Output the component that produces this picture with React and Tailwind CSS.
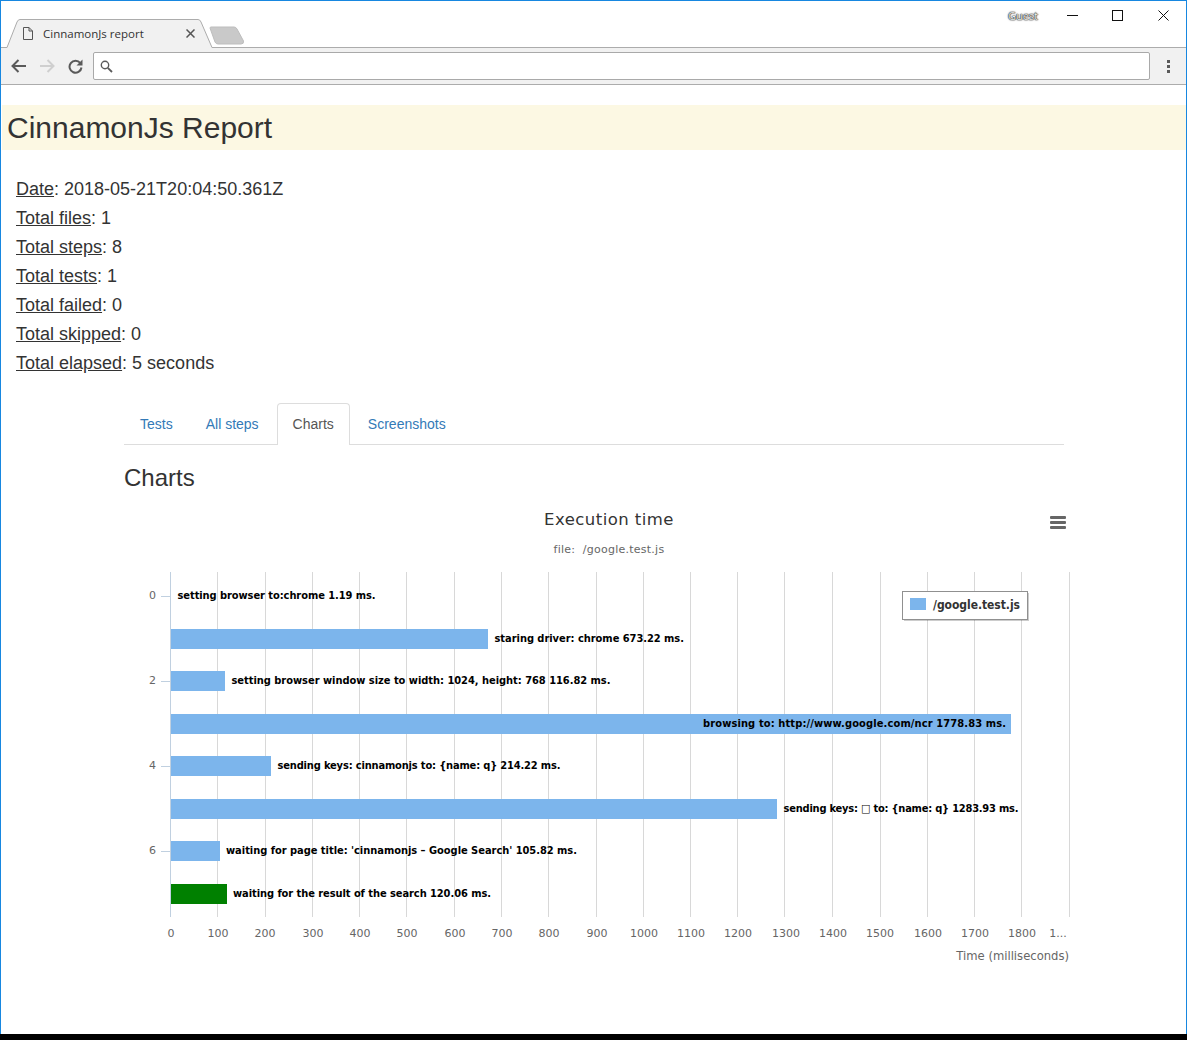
const FONT = { fontFamily: '"DejaVu Sans", Verdana, sans-serif' };
const COND = { fontFamily: '"DejaVu Sans Condensed", "DejaVu Sans", Verdana, sans-serif' };

const gridXs = [217, 265, 312, 359, 406, 454, 501, 548, 596, 643, 690, 737, 784, 832, 880, 927, 974, 1021, 1069];
const axisLabels = [
  [171, '0'], [218, '100'], [265, '200'], [313, '300'], [360, '400'], [407, '500'], [455, '600'], [502, '700'], [549, '800'], [597, '900'],
  [644, '1000'], [691, '1100'], [738, '1200'], [786, '1300'], [833, '1400'], [880, '1500'], [928, '1600'], [975, '1700'], [1022, '1800'], [1058, '1...'],
];
const bars = [
  { y: 587, end: 171, label: 'setting browser to:chrome 1.19 ms.', lx: 177.5, ly: 599, w: 198 },
  { y: 629, end: 488, label: 'staring driver: chrome 673.22 ms.', lx: 494.5, ly: 642, w: 189.5 },
  { y: 671, end: 225, label: 'setting browser window size to width: 1024, height: 768 116.82 ms.', lx: 231.5, ly: 684, w: 379 },
  { y: 714, end: 1011, label: 'browsing to: http://www.google.com/ncr 1778.83 ms.', lx: 703, ly: 727, w: 303 },
  { y: 756, end: 271, label: 'sending keys: cinnamonjs to: {name: q} 214.22 ms.', lx: 277.5, ly: 769, w: 283 },
  { y: 799, end: 777, label: 'sending keys: □ to: {name: q} 1283.93 ms.', lx: 783.5, ly: 812, w: 235 },
  { y: 841, end: 220, label: "waiting for page title: 'cinnamonjs – Google Search' 105.82 ms.", lx: 226, ly: 854, w: 351 },
  { y: 884, end: 227, label: 'waiting for the result of the search 120.06 ms.', lx: 233, ly: 897, w: 258, color: '#008000' },
];

function Chart() {
  return (
    <svg width="960" height="480" viewBox="120 500 960 480" className="block" style={FONT}>
      <text x="609" y="524.5" textAnchor="middle" fontSize="16.5" letterSpacing="0.45" fill="#333">Execution time</text>
      <text x="609" y="553" textAnchor="middle" fontSize="11" letterSpacing="0.25" fill="#666">{'file:\u00a0\u00a0/google.test.js'}</text>
      <g fill="#666">
        <rect x="1050" y="516" width="16" height="3" rx="1" />
        <rect x="1050" y="521" width="16" height="3" rx="1" />
        <rect x="1050" y="526" width="16" height="3" rx="1" />
      </g>
      {gridXs.map((x) => (
        <rect key={x} x={x} y="572" width="1" height="345" fill="#d8d8d8" />
      ))}
      <rect x="170" y="572" width="1" height="345" fill="#c0d0e0" />
      {[0, 2, 4, 6].map((n, i) => (
        <g key={n}>
          <rect x="161" y={596 + i * 85} width="9" height="1" fill="#c0d0e0" />
          <text x="156" y={599 + i * 85} textAnchor="end" fontSize="11" fill="#666">{n}</text>
        </g>
      ))}
      {bars.map((b) => (
        <g key={b.y}>
          {b.end > 171 && <rect x="171" y={b.y} width={b.end - 171} height="20" fill={b.color || '#7cb5ec'} />}
          <text
            x={b.lx}
            y={b.ly}
            textLength={b.w}
            lengthAdjust="spacing"
            fontSize="11"
            fontWeight="700"
            fill="#000"
            style={COND}
          >
            {b.label}
          </text>
        </g>
      ))}
      {axisLabels.map(([x, t]) => (
        <text key={t} x={x} y="937" textAnchor="middle" fontSize="11" fill="#666">{t}</text>
      ))}
      <text x="1069" y="960" textAnchor="end" fontSize="11.6" fill="#666">Time (milliseconds)</text>
      <rect x="904" y="593" width="125" height="28" fill="#000" opacity="0.2" />
      <rect x="902.5" y="591.5" width="125" height="28" fill="#fff" stroke="#909090" />
      <rect x="910" y="598" width="16" height="12" fill="#7cb5ec" />
      <text x="933" y="609" fontSize="12" fontWeight="700" fill="#333" textLength="87" style={COND}>/google.test.js</text>
    </svg>
  );
}

function Tab({ children, active }) {
  return active ? (
    <div className="h-[42px] px-[15px] pt-[10px] bg-white border border-[#ddd] border-b-0 rounded-t-[4px] text-[14px] leading-[20px] text-[#555] -mb-px ml-[1px] mr-[2px]">
      {children}
    </div>
  ) : (
    <div className="h-[41px] px-[16px] pt-[11px] text-[14px] leading-[20px] text-[#337ab7] mr-[1px]">{children}</div>
  );
}

function Info({ label, value }) {
  return (
    <div className="h-[29px] leading-[29px] text-[18px] text-[#333]">
      <span className="underline">{label}</span>: {value}
    </div>
  );
}

export default function App() {
  return (
    <div
      className="w-[1187px] h-[1040px] flex flex-col overflow-hidden bg-white"
      style={{ fontFamily: '"Liberation Sans", Arial, sans-serif' }}
    >
      <div className="flex-1 flex flex-col border-x border-t border-[#1787e0] min-h-0">
        {/* tab strip */}
        <div className="h-[47px] flex border-b border-[#acacac] relative">
          <div className="relative w-[210px] h-[29px] ml-[4px] mt-[18px] flex items-center pl-[18px] pr-[20px] gap-[10px]">
            <svg className="absolute left-0 top-0" width="212" height="30" viewBox="0 0 212 30">
              <path d="M0.5 28.5 H2 L12 3 Q13 1 15 1 H193 Q195 1 196 3 L207 28.5 H212 V30 H0 Z" fill="#f1f1f1" />
              <path d="M0 28.5 H2 L12 3 Q13 0.5 15 0.5 H193 Q195 0.5 196 3 L207 28.5 H212" fill="none" stroke="#acacac" />
            </svg>
            <svg className="relative shrink-0" width="10" height="13" viewBox="0 0 10 13">
              <path d="M0.5 0.5 H6 L9.5 4 V12.5 H0.5 Z M6 0.5 V4 H9.5" fill="none" stroke="#555" />
            </svg>
            <span className="relative flex-1 text-[11.5px] leading-[15px] text-[#333] mb-[1px]" style={{ fontFamily: '"Open Sans", sans-serif' }}>
              CinnamonJs report
            </span>
            <svg className="relative shrink-0" width="9" height="9" viewBox="0 0 9 9">
              <path d="M0.5 0.5 L8.5 8.5 M8.5 0.5 L0.5 8.5" stroke="#555" strokeWidth="1.5" />
            </svg>
          </div>
          <svg className="mt-[25px] -ml-[6px]" width="36" height="19" viewBox="0 0 36 19">
            <path d="M1 2 Q1 1 2 1 H25 Q27 1 28 3 L34.5 15 Q35 18 32 18 H9 Q7 18 6 16 Z" fill="#c9c9c9" stroke="#bdbdbd" />
          </svg>
          <div className="ml-auto flex h-[30px]">
            <span
              className="mt-[7px] mr-[12px] text-[11px] leading-[15px] text-[#eeeeee]"
              style={{ fontFamily: '"Open Sans", sans-serif', textShadow: '0 0 1px #111, 0 0 1px #111, 0 0 2px #444' }}
            >
              Guest
            </span>
            <div className="w-[45px] flex items-center justify-center pb-[1px]">
              <svg width="11" height="11" viewBox="0 0 11 11"><path d="M0 5.5 H11" stroke="#111" /></svg>
            </div>
            <div className="w-[45px] flex items-center justify-center pb-[1px]">
              <svg width="11" height="11" viewBox="0 0 11 11"><rect x="0.5" y="0.5" width="10" height="10" fill="none" stroke="#111" /></svg>
            </div>
            <div className="w-[46px] flex items-center justify-center pb-[1px]">
              <svg width="11" height="11" viewBox="0 0 11 11"><path d="M0.5 0.5 L10.5 10.5 M10.5 0.5 L0.5 10.5" stroke="#111" /></svg>
            </div>
          </div>
        </div>

        {/* toolbar */}
        <div className="h-[37px] flex items-center bg-[#f1f1f1] border-b border-[#acacac]">
          <div className="w-[36px] flex justify-center">
            <svg width="16" height="14" viewBox="0 0 16 14"><path d="M15 7 H2 M7.5 1 L1.5 7 L7.5 13" fill="none" stroke="#5a5a5a" strokeWidth="2" /></svg>
          </div>
          <div className="w-[20px] flex justify-center">
            <svg width="16" height="14" viewBox="0 0 16 14"><path d="M1 7 H14 M8.5 1 L14.5 7 L8.5 13" fill="none" stroke="#cfcfcf" strokeWidth="2" /></svg>
          </div>
          <div className="w-[36px] flex justify-center">
            <svg width="15" height="15" viewBox="0 0 15 15">
              <path d="M12.3 4 A6 6 0 1 0 13.5 8.5" fill="none" stroke="#5a5a5a" strokeWidth="2" />
              <path d="M14.5 0.5 V6.5 H8.5 Z" fill="#5a5a5a" />
            </svg>
          </div>
          <div className="w-[1057px] h-[28px] bg-white border border-[#a9a9a9] rounded-[2px] flex items-center pl-[6px]">
            <svg width="13" height="13" viewBox="0 0 13 13">
              <circle cx="5" cy="5" r="3.7" fill="none" stroke="#5a5a5a" strokeWidth="1.4" />
              <path d="M7.8 7.8 L12 12" stroke="#5a5a5a" strokeWidth="1.8" />
            </svg>
          </div>
          <div className="flex-1 flex justify-center">
            <div className="flex flex-col gap-[2px]">
              <span className="block w-[3px] h-[3px] bg-[#5a5a5a]" />
              <span className="block w-[3px] h-[3px] bg-[#5a5a5a]" />
              <span className="block w-[3px] h-[3px] bg-[#5a5a5a]" />
            </div>
          </div>
        </div>

        {/* page */}
        <div className="flex-1 min-h-0 pt-[20px]">
          <div className="h-[45px] ml-[1px] pl-[5px] bg-[#fcf8e3] text-[30px] leading-[45px] text-[#333]">CinnamonJs Report</div>
          <div className="pl-[15px] pt-[25px]">
            <Info label="Date" value="2018-05-21T20:04:50.361Z" />
            <Info label="Total files" value="1" />
            <Info label="Total steps" value="8" />
            <Info label="Total tests" value="1" />
            <Info label="Total failed" value="0" />
            <Info label="Total skipped" value="0" />
            <Info label="Total elapsed" value="5 seconds" />
          </div>
          <div className="ml-[123px] w-[940px] mt-[25px]">
            <div className="flex items-end h-[42px] border-b border-[#ddd]">
              <Tab>Tests</Tab>
              <Tab>All steps</Tab>
              <Tab active>Charts</Tab>
              <Tab>Screenshots</Tab>
            </div>
            <div className="mt-[16px] text-[24px] leading-[33px] text-[#333]">Charts</div>
          </div>
          <div className="ml-[119px] mt-[6px]">
            <Chart />
          </div>
        </div>
      </div>
      <div className="h-[6px] bg-black shrink-0" />
    </div>
  );
}
